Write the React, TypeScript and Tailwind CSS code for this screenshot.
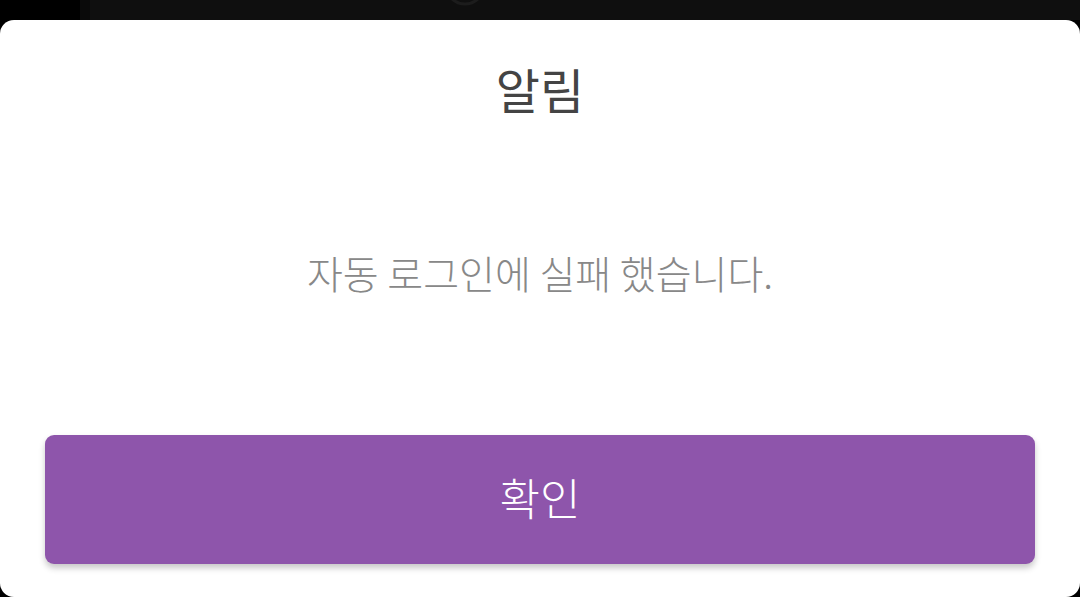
import React from 'react';

const font = { fontFamily: '"Noto Sans CJK KR", "Noto Sans", sans-serif' };

export default function App() {
  return (
    <div className="flex h-[597px] w-[1080px] flex-col overflow-hidden bg-black" style={font}>
      {/* status area behind the dialog */}
      <div className="relative flex h-[20px] shrink-0">
        <div className="w-[80px] bg-black" />
        <div className="w-[10px] bg-[#0a0a0a]" />
        <div className="relative flex-1 bg-[#0f0f0f]">
          <svg className="absolute left-[350px] top-[-30px]" width="50" height="40" viewBox="0 0 50 40">
            <circle cx="25" cy="15" r="19" fill="none" stroke="#1c1c1c" strokeWidth="3" />
          </svg>
        </div>
      </div>

      {/* dialog */}
      <div className="flex flex-1 flex-col rounded-[14px] bg-white">
        <div className="flex h-[136px] items-center justify-center">
          <h1 className="text-[48px] font-normal leading-none text-[#444444]">알림</h1>
        </div>
        <div className="flex h-[232px] items-center justify-center">
          <p className="text-[39px] font-light leading-none text-[#888888]">자동 로그인에 실패 했습니다.</p>
        </div>
        <div className="mt-[47px] px-[45px]">
          <button className="flex h-[129px] w-full items-center justify-center rounded-[9px] bg-[#8e55ab] pb-[6px] text-[44px] font-light leading-none text-white shadow-[0_4px_6px_rgba(0,0,0,0.22)]">
            확인
          </button>
        </div>
      </div>
    </div>
  );
}
